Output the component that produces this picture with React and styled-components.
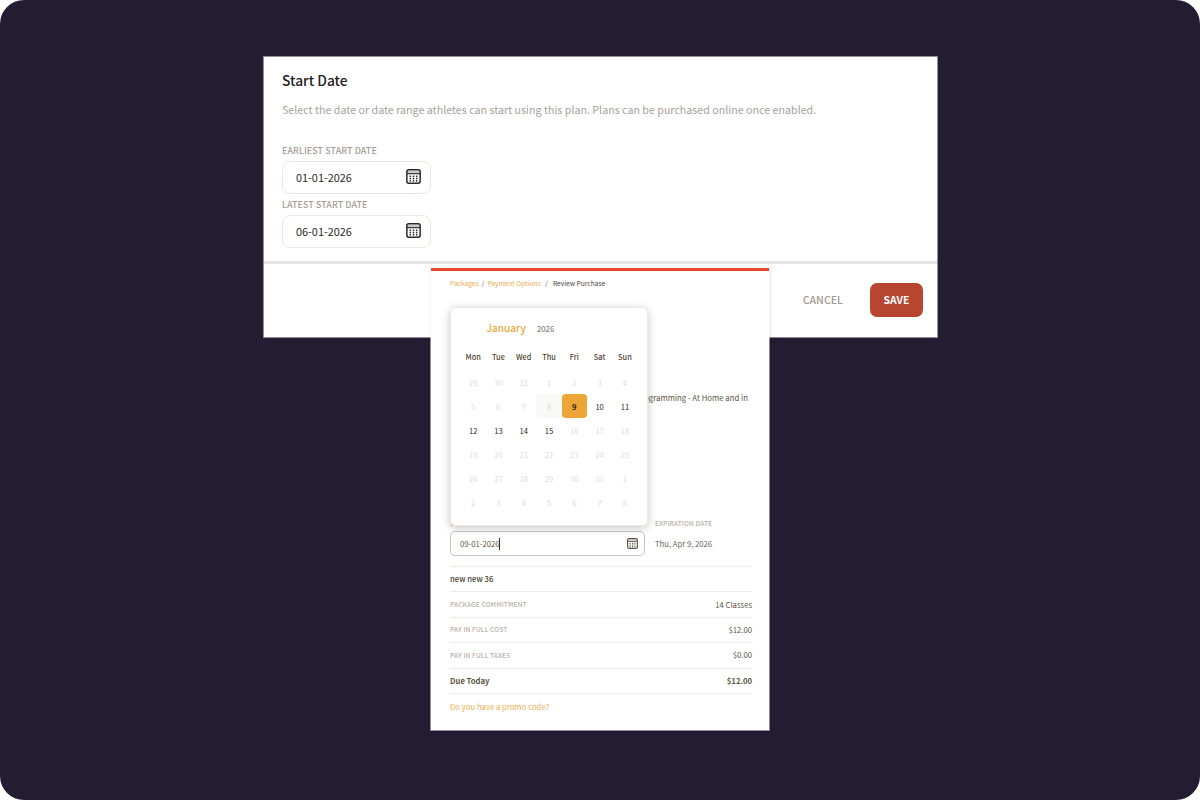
import React from "react";
import styled, { createGlobalStyle } from "styled-components";

const Global = createGlobalStyle`
  html, body {
    margin: 0;
    padding: 0;
    background: #fff;
  }
  * {
    box-sizing: border-box;
  }
`;

const FONT = `"Noto Sans CJK JP", "Noto Sans", "Liberation Sans", sans-serif`;

const Frame = styled.div`
  position: relative;
  overflow: hidden;
  width: 1200px;
  height: 800px;
  padding: 56px 0 0 263px;
  border-radius: 24px;
  background: #231c33;
  font-family: ${FONT};
`;

// back sheet
const PlanCard = styled.section`
  width: 675px;
  height: 282px;
  border: 1px solid rgba(255, 255, 255, 0.5);
  background: #fff;
  background-clip: padding-box;
  display: flex;
  flex-direction: column;
`;

const PlanBody = styled.div`
  height: 207px;
  padding: 13px 18px 0;
  border-bottom: 3px solid #e4e4e4;
`;

const Title = styled.h2`
  margin: 0;
  font-size: 13.8px;
  line-height: 20px;
  font-weight: 500;
  color: #25211f;
`;

const Lead = styled.p`
  margin: 10px 0 24px;
  font-size: 10.7px;
  line-height: 20px;
  color: #a8a19a;
  white-space: nowrap;
`;

const FieldLabel = styled.div`
  font-size: 8.9px;
  line-height: 13px;
  font-weight: 500;
  letter-spacing: 0.1px;
  color: #a39b93;
  text-transform: uppercase;
`;

const DateBox = styled.div`
  display: flex;
  align-items: center;
  justify-content: space-between;
  width: 149px;
  height: 33px;
  margin: 4px 0;
  padding: 0 9px 2px 13px;
  border: 1px solid #efe6df;
  border-radius: 8px;
  font-size: 10.9px;
  color: #2d2926;
`;

const PlanFooter = styled.div`
  flex: 1;
  display: flex;
  justify-content: flex-end;
  align-items: center;
  gap: 27px;
  padding: 0 14px 2px 0;
`;

const CancelButton = styled.button`
  border: 0;
  padding: 0;
  background: none;
  font: 500 10.6px ${FONT};
  color: #a39b93;
`;

const SaveButton = styled.button`
  width: 53px;
  height: 34px;
  border: 0;
  border-radius: 7px;
  background: #b84530;
  font: 700 10.4px ${FONT};
  color: #fff;
`;

// purchase sheet lying over the plan card
const PurchaseCard = styled.section`
  position: absolute;
  left: 430px;
  top: 267px;
  width: 340px;
  height: 464px;
  padding: 0 17px 0 19px;
  background: #fff;
  background-clip: padding-box;
  border: 1px solid rgba(255, 255, 255, 0.5);
  border-top: 0;
  box-shadow: 1px 0 3px rgba(0, 0, 0, 0.1);
`;

const TopBar = styled.div`
  height: 3px;
  margin: 1px -17px 0 -19px;
  background: #e8452c;
`;

const Crumbs = styled.nav`
  display: flex;
  gap: 3px;
  margin-top: 7px;
  font-size: 6.65px;
  line-height: 10px;
  color: #6a6258;
`;

const CrumbLink = styled.span`
  color: #f3ae55;
`;

const CrumbCurrent = styled.span`
  margin-left: 2px;
  color: #4c463d;
`;

const ProgramLine = styled.p`
  margin: 104px 4px 0 0;
  height: 126px;
  font-size: 7.8px;
  line-height: 12px;
  text-align: right;
  white-space: nowrap;
  color: #5d5444;
`;

const StartRow = styled.div`
  display: flex;
  gap: 10px;
`;

const StartField = styled.div`
  width: 195px;
`;

const SmallLabel = styled.div`
  height: 10px;
  font-size: 6.6px;
  line-height: 10px;
  font-weight: 500;
  letter-spacing: 0.1px;
  color: #b7b0a8;
  text-transform: uppercase;
`;

const StartInput = styled.div`
  display: flex;
  align-items: center;
  justify-content: space-between;
  height: 25px;
  margin-top: 3px;
  padding: 0 6px 0 9px;
  border: 1px solid #cbc5bd;
  border-radius: 5px;
  font-size: 7.7px;
  color: #5d5444;
`;

const Caret = styled.span`
  display: inline-block;
  width: 1px;
  height: 12px;
  vertical-align: -3px;
  background: #332c22;
`;

const ExpiryField = styled.div`
  flex: 1;
`;

const ExpiryValue = styled.div`
  height: 25px;
  margin-top: 3px;
  font-size: 7.7px;
  line-height: 25px;
  color: #6b6253;
`;

const Rows = styled.div`
  margin-top: 10px;
`;

const Row = styled.div`
  display: flex;
  align-items: center;
  justify-content: space-between;
  height: 25.4px;
  padding-bottom: 1px;
  border-top: 1px solid #f1ebe6;
  font-size: 7.7px;
  font-weight: ${(p) => (p.$strong ? 700 : 400)};
  color: #5d5444;
`;

const RowLabel = styled.span`
  font-size: 6.6px;
  font-weight: 500;
  letter-spacing: 0.1px;
  color: #b7b0a8;
  text-transform: uppercase;
`;

const PackageName = styled.span`
  font-weight: 500;
  color: #4c4334;
`;

const PromoLink = styled.div`
  height: 26px;
  border-top: 1px solid #f1ebe6;
  font-size: 7.75px;
  line-height: 25px;
  color: #f3ad55;
`;

// date picker popover
const Calendar = styled.div`
  position: absolute;
  left: 19px;
  top: 40px;
  width: 198px;
  height: 219px;
  padding: 0 9.5px;
  background: #fff;
  border: 1px solid #f1eae4;
  border-radius: 6px;
  box-shadow: 0 2px 8px rgba(60, 50, 40, 0.28);
`;

const CalendarHead = styled.div`
  display: flex;
  align-items: baseline;
  gap: 11px;
  padding: 13px 0 0 26px;
  height: 37px;
`;

const Month = styled.span`
  font-size: 9.9px;
  font-weight: 500;
  letter-spacing: 0.1px;
  color: #eea63a;
`;

const Year = styled.span`
  font-size: 7.6px;
  font-weight: 500;
  color: #8b857c;
`;

const Grid = styled.div`
  display: grid;
  grid-template-columns: repeat(7, 25.3px);
  grid-template-rows: 25px repeat(6, 24.1px);
`;

const WeekDay = styled.div`
  font-size: 7.4px;
  font-weight: 500;
  line-height: 24px;
  text-align: center;
  color: #4f4636;
`;

const Day = styled.div`
  display: flex;
  align-items: center;
  justify-content: center;
  font-size: 7.6px;
  border-radius: 4px;
  font-weight: ${(p) => (p.$kind === "selected" ? 700 : 400)};
  color: ${(p) =>
    p.$kind === "active" || p.$kind === "selected" ? "#2a2622" : "#e0dcd8"};
  background: ${(p) =>
    p.$kind === "selected" ? "#eea537" : p.$kind === "today" ? "#f9f9f8" : "transparent"};
`;

const CalendarIcon = ({ size = 15, color = "#2d2926" }) => (
  <svg width={size} height={size} viewBox="0 0 16 16" fill="none">
    <rect x="0.9" y="0.9" width="14.2" height="14.2" rx="2" stroke={color} strokeWidth="1.6" />
    <path d="M1 5h14" stroke={color} strokeWidth="1.2" />
    <path d="M1.5 2h13v3h-13z" fill={color} opacity="0.25" />
    {[7.8, 10.2, 12.6].map((y) =>
      [4.6, 8, 11.4].map((x) => (
        <rect key={`${x}-${y}`} x={x - 0.8} y={y - 0.8} width="1.6" height="1.6" fill={color} />
      ))
    )}
  </svg>
);

const WEEK = ["Mon", "Tue", "Wed", "Thu", "Fri", "Sat", "Sun"];

const DAYS = [
  29, 30, 31, 1, 2, 3, 4,
  5, 6, 7, 8, 9, 10, 11,
  12, 13, 14, 15, 16, 17, 18,
  19, 20, 21, 22, 23, 24, 25,
  26, 27, 28, 29, 30, 31, 1,
  2, 3, 4, 5, 6, 7, 8,
];

const dayKind = (i) => {
  if (i === 10) return "today";
  if (i === 11) return "selected";
  if (i >= 12 && i <= 17) return "active";
  return "muted";
};

const COSTS = [
  { label: "Package Commitment", value: "14 Classes" },
  { label: "Pay in Full Cost", value: "$12.00" },
  { label: "Pay in Full Taxes", value: "$0.00" },
];

const App = () => {
  return (
    <Frame>
      <Global />
      <PlanCard>
        <PlanBody>
          <Title>Start Date</Title>
          <Lead>
            Select the date or date range athletes can start using this plan. Plans can be
            purchased online once enabled.
          </Lead>
          <FieldLabel>Earliest Start Date</FieldLabel>
          <DateBox>
            01-01-2026
            <CalendarIcon />
          </DateBox>
          <FieldLabel>Latest Start Date</FieldLabel>
          <DateBox>
            06-01-2026
            <CalendarIcon />
          </DateBox>
        </PlanBody>
        <PlanFooter>
          <CancelButton>CANCEL</CancelButton>
          <SaveButton>SAVE</SaveButton>
        </PlanFooter>
      </PlanCard>

      <PurchaseCard>
        <TopBar />
        <Crumbs>
          <CrumbLink>Packages</CrumbLink>/<CrumbLink>Payment Options</CrumbLink>
          <span>&nbsp;/</span>
          <CrumbCurrent>Review Purchase</CrumbCurrent>
        </Crumbs>
        <ProgramLine>Online Programming - At Home and in</ProgramLine>
        <StartRow>
          <StartField>
            <SmallLabel>Start Date</SmallLabel>
            <StartInput>
              <span>
                09-01-2026
                <Caret />
              </span>
              <CalendarIcon size={11} color="#5d5444" />
            </StartInput>
          </StartField>
          <ExpiryField>
            <SmallLabel>Expiration Date</SmallLabel>
            <ExpiryValue>Thu, Apr 9, 2026</ExpiryValue>
          </ExpiryField>
        </StartRow>
        <Rows>
          <Row>
            <PackageName>new new 36</PackageName>
          </Row>
          {COSTS.map((c) => (
            <Row key={c.label}>
              <RowLabel>{c.label}</RowLabel>
              <span>{c.value}</span>
            </Row>
          ))}
          <Row $strong>
            <span>Due Today</span>
            <span>$12.00</span>
          </Row>
          <PromoLink>Do you have a promo code?</PromoLink>
        </Rows>

        <Calendar>
          <CalendarHead>
            <Month>January</Month>
            <Year>2026</Year>
          </CalendarHead>
          <Grid>
            {WEEK.map((w) => (
              <WeekDay key={w}>{w}</WeekDay>
            ))}
            {DAYS.map((d, i) => (
              <Day key={i} $kind={dayKind(i)}>
                {d}
              </Day>
            ))}
          </Grid>
        </Calendar>
      </PurchaseCard>
    </Frame>
  );
};

export default App;
